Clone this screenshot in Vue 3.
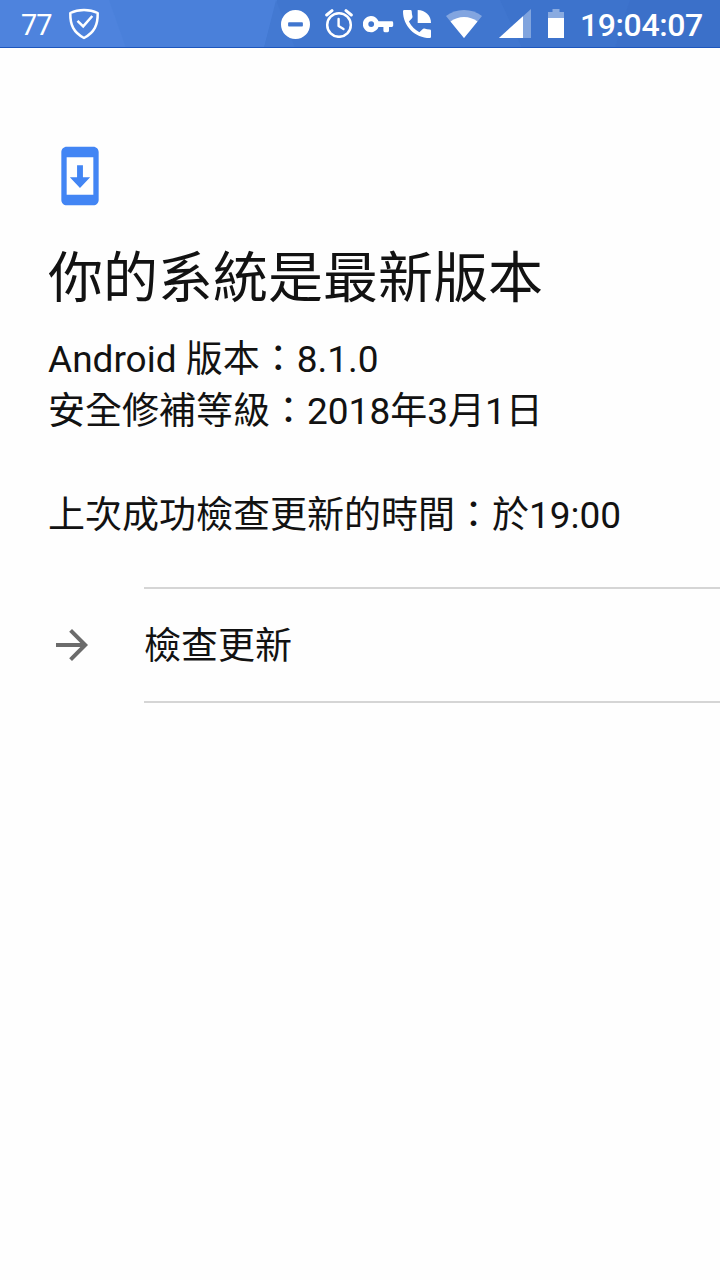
<template>
  <div class="screen">
    <header class="status-bar">
      <svg class="wallpaper" width="720" height="48" viewBox="0 0 720 48">
        <rect width="720" height="48" fill="#4a80da" />
        <path d="M0 0H109L126 48H0z" fill="#4e83dd" />
        <path d="M277 0H720V48H264z" fill="#4076cf" />
        <path d="M276 0L295 48H264z" fill="#4379d2" />
        <path d="M500 0L522 48H615L630 0z" fill="#3d73cc" />
        <path d="M630 0H720V48H615z" fill="#3b70c9" />
        <rect y="47" width="720" height="1" fill="#1d56bd" />
      </svg>
      <span class="count">{{ notificationCount }}</span>
      <svg class="shield" width="32" height="32" viewBox="0 0 32 32" fill="none" stroke="#fff">
        <path d="M16 2C11.500 2 6 3.200 2.300 5C2.100 17 5.500 24.500 16 30C26.500 24.500 29.900 17 29.700 5C26 3.200 20.500 2 16 2z" stroke-width="2.500" stroke-linejoin="round" />
        <path d="M9.500 12.800L15.200 18.400L24.300 8" stroke-width="2.500" />
      </svg>
      <div class="icons">
        <svg class="dnd" width="29" height="29" viewBox="2 2 20 20">
          <path fill-rule="evenodd" d="M12 2a10 10 0 1 0 0 20a10 10 0 1 0 0-20zM7.500 10.500h9a.6.6 0 0 1 .6.6v1.600a.6.6 0 0 1-.6.6H7.500a.6.6 0 0 1-.6-.6v-1.600a.6.6 0 0 1 .6-.6z" />
        </svg>
        <svg class="alarm" width="28" height="29" viewBox="0 0 28 29" fill="none" stroke="#fff" stroke-linecap="round">
          <circle cx="14" cy="16" r="11.800" stroke-width="2.500" />
          <path d="M1.700 6L7 1.700M26.300 6L21 1.700" stroke-width="3" />
          <path d="M13.600 10V17L18.500 20" stroke-width="2.400" stroke-linejoin="round" />
        </svg>
        <svg class="key" width="31" height="17" viewBox="0 0 31 17">
          <path fill-rule="evenodd" d="M15.500 5.300H28.800a1.400 1.400 0 0 1 1.400 1.400V9.600a1.400 1.400 0 0 1-1.400 1.400H26V14.800a1.400 1.400 0 0 1-1.400 1.400H21.800a1.400 1.400 0 0 1-1.400-1.400V11H15.500A8.100 8.100 0 1 1 15.500 5.300zM8.200 5.200a2.900 2.900 0 1 0 0 5.800a2.900 2.900 0 1 0 0-5.800z" />
        </svg>
        <svg class="phone" width="28" height="28" viewBox="0 0 28 28">
          <path d="M14.700 0V13H28C28 5.500 22.200 0 14.700 0z" />
          <path d="M1.200 0H7.500Q8.600 0 8.700 1.200Q8.800 4 9.500 6.500Q9.700 7.400 9 8.200L5.900 11.600Q9.500 18.700 16.400 22.200L19.800 18.900Q20.500 18.300 21.400 18.600Q24 19.400 26.800 19.500Q28 19.600 28 20.700V26.800Q28 28 26.800 28C12 28 0 16 0 1.200Q0 0 1.200 0z" />
        </svg>
        <svg class="wifi" width="36" height="28" viewBox="0 0 36 28">
          <path opacity=".35" d="M0 6C5 2.300 11 0 18 0S31 2.300 36 6L18 28z" />
          <path d="M4.500 11.500C8.500 8.600 13 7 18 7s9.500 1.600 13.500 4.500L18 28z" />
        </svg>
        <svg class="signal" width="33" height="29" viewBox="0 0 33 29">
          <path opacity=".35" d="M32 0V29H0z" />
          <path d="M24 7.300V29H0z" />
        </svg>
        <svg class="battery" width="16" height="29" viewBox="0 0 16 29">
          <path opacity=".4" d="M4.500 0h7v3H16v6H0V3h4.500z" />
          <path d="M0 9h16v20H0z" />
        </svg>
        <span class="clock">{{ clock }}</span>
      </div>
    </header>

    <main class="content">
      <svg class="update-icon" width="64" height="64" viewBox="0 0 24 24">
        <path d="M17 1.010L7 1c-1.100 0-2 .9-2 2v18c0 1.100.9 2 2 2h10c1.100 0 2-.9 2-2V3c0-1.100-.9-1.990-2-1.990zM17 19H7V5h10v14zm-1.200-6.500h-2.700V8h-2.200v4.500H8.200l3.800 4 3.800-4z" />
      </svg>
      <h1>你的系統是最新版本</h1>
      <div class="info">
        <p>Android 版本：{{ androidVersion }}</p>
        <p>安全修補等級：{{ patchLevel }}</p>
        <p class="last-check">上次成功檢查更新的時間：於{{ lastCheck }}</p>
      </div>
    </main>

    <button class="action" type="button" @click="checkUpdate">
      <svg width="48" height="48" viewBox="0 0 24 24">
        <path d="M12 4l-1.410 1.410L16.170 11H4v2h12.170l-5.580 5.590L12 20l8-8z" />
      </svg>
      <span class="action-label">檢查更新</span>
    </button>
  </div>
</template>

<script setup>
import { ref } from 'vue';

const notificationCount = ref(77);
const clock = ref('19:04:07');
const androidVersion = ref('8.1.0');
const patchLevel = ref('2018年3月1日');
const lastCheck = ref('19:00');

const checkUpdate = () => {
  lastCheck.value = clock.value.slice(0, 5);
};
</script>

<style>
body {
  margin: 0;
  background: #fefefe;
}
</style>

<style scoped>
.screen {
  width: 720px;
  height: 1280px;
  overflow: hidden;
  background: #fefefe;
  color: #121212;
  font-family: Roboto, 'Noto Sans CJK TC', sans-serif;
}

.status-bar {
  position: relative;
  display: flex;
  align-items: flex-start;
  height: 48px;
  color: #fff;
  fill: #fff;
}

.wallpaper {
  position: absolute;
  top: 0;
  left: 0;
}

.count,
.shield,
.icons {
  position: relative;
}

.count {
  width: 47px;
  padding-left: 21px;
  font-size: 29px;
  font-weight: 400;
  letter-spacing: -1px;
  line-height: 50px;
}

.shield {
  margin-top: 8px;
}

.icons {
  display: flex;
  flex: 1;
  margin-left: 180.500px;
}

.icons svg {
  flex: none;
}

.dnd {
  margin-top: 9.500px;
}

.alarm {
  margin: 9px 0 0 15.500px;
}

.key {
  margin: 16px 0 0 10px;
}

.phone {
  margin: 10px 0 0 9px;
}

.wifi {
  margin: 10px 0 0 15px;
}

.signal {
  margin: 9px 0 0 17px;
}

.battery {
  margin: 9px 0 0 16px;
}

.clock {
  margin-left: 16px;
  font-size: 32px;
  font-weight: 500;
  letter-spacing: -0.4px;
  line-height: 50px;
  white-space: nowrap;
}

.content {
  padding: 96px 48px 0;
}

.update-icon {
  display: block;
  fill: #4285f4;
}

h1 {
  margin: 30px 0 0;
  font-size: 55px;
  font-weight: 400;
  line-height: 80px;
}

.info {
  margin-top: 16px;
}

.info p {
  margin: 0;
  font-size: 37px;
  line-height: 52px;
  white-space: nowrap;
}

.info .last-check {
  margin-top: 52px;
}

.action {
  display: flex;
  align-items: center;
  width: 100%;
  margin: 45px 0 0;
  padding: 0 0 0 48px;
  border: 0;
  background: none;
  color: inherit;
  font: inherit;
  text-align: left;
}

.action svg {
  flex: none;
  fill: #6b6b6b;
}

.action-label {
  flex: 1;
  margin-left: 48px;
  padding-top: 4px;
  border-top: 2px solid #d5d5d5;
  border-bottom: 2px solid #d5d5d5;
  font-size: 37px;
  line-height: 108px;
}
</style>
